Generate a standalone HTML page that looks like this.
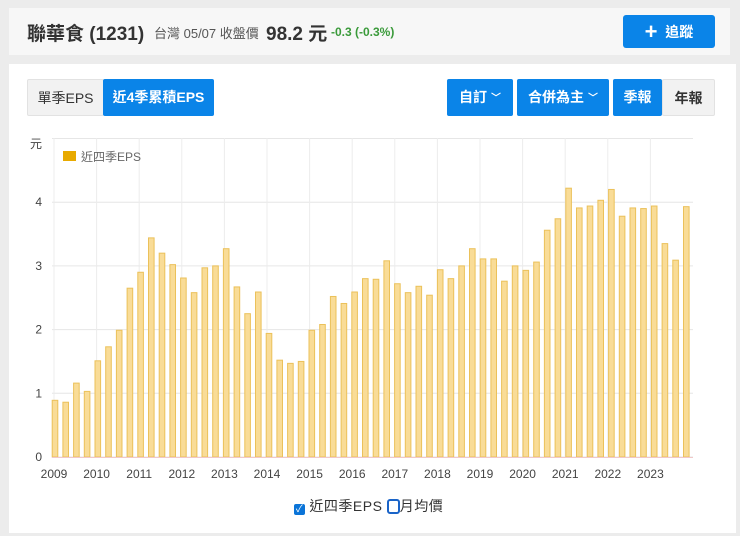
<!DOCTYPE html>
<html><head><meta charset="utf-8"><style>
body{margin:0;width:740px;height:536px;background:#ececec;font-family:"Liberation Sans","Noto Sans CJK TC",sans-serif;position:relative;overflow:hidden}
.card{position:absolute;background:#fff}
.b{position:absolute;top:79px;height:37px;line-height:37px;font-size:14px;text-align:center;color:#fff;background:#0a84e8;border-radius:2px;font-weight:bold}
.g{background:#f2f2f2;color:#333;border:1px solid #e2e2e2;box-sizing:border-box}
.c{font-size:10px;vertical-align:1px}
</style></head><body>
<div class="card" style="left:9px;top:8px;width:721px;height:47px;background:#f7f7f7"></div>
<div style="position:absolute;left:27px;top:19px;font-size:19px;font-weight:bold;color:#333">聯華食 (1231)</div>
<div style="position:absolute;left:154px;top:23px;font-size:13px;color:#555">台灣 05/07 收盤價</div>
<div style="position:absolute;left:266px;top:19px;font-size:19px;font-weight:bold;color:#333">98.2 元</div>
<div style="position:absolute;left:331px;top:25px;font-size:12px;font-weight:bold;color:#3a9a3a">-0.3 (-0.3%)</div>
<div style="position:absolute;left:623px;top:15px;width:92px;height:33px;background:#0a84e8;border-radius:3px;color:#fff;font-size:14px;font-weight:bold;line-height:33px;text-align:center"><span style="font-size:22px;vertical-align:-2px">+</span>&nbsp; 追蹤</div>
<div class="card" style="left:9px;top:64px;width:727px;height:469px"></div>
<div class="b g" style="left:27px;width:77px;font-weight:normal">單季EPS</div>
<div class="b" style="left:103px;width:111px">近4季累積EPS</div>
<div class="b" style="left:447px;width:66px">自訂 <span class="c">﹀</span></div>
<div class="b" style="left:517px;width:92px">合併為主 <span class="c">﹀</span></div>
<div class="b" style="left:613px;width:49px">季報</div>
<div class="b g" style="left:662px;width:53px">年報</div>
<svg style="position:absolute;left:0;top:0" width="740" height="536" id="s"></svg>
<div style="position:absolute;left:294px;top:496px;font-size:14px;color:#333;letter-spacing:0.5px"><span style="display:inline-block;width:11px;height:11px;background:#0a74d8;border-radius:2px;color:#fff;font-size:10px;line-height:11px;text-align:center;vertical-align:-1px">✓</span> 近四季EPS <span style="display:inline-block;width:13px;height:15px;border:2px solid #1a64c8;border-radius:3px;vertical-align:-3px;box-sizing:border-box"></span>月均價</div>
<script>
var v=[0.89,0.86,1.16,1.03,1.51,1.73,1.99,2.65,2.90,3.44,3.20,3.02,2.81,2.58,2.97,3.00,3.27,2.67,2.25,2.59,1.94,1.52,1.47,1.50,1.99,2.08,2.52,2.41,2.59,2.80,2.79,3.08,2.72,2.58,2.68,2.54,2.94,2.80,3.00,3.27,3.11,3.11,2.76,3.00,2.93,3.06,3.56,3.74,4.22,3.91,3.94,4.03,4.20,3.78,3.91,3.90,3.94,3.35,3.09,3.93];
var h='',y0=457,u=63.7;
for(var i=0;i<=5;i++){var y=y0-i*u;h+='<line x1="52" x2="693" y1="'+y+'" y2="'+y+'" stroke="#e6e6e6"/>';if(i<5)h+='<text x="42" y="'+(y+4)+'" font-size="12" fill="#444" text-anchor="end">'+i+'</text>';}
h+='<text x="30" y="148" font-size="12" fill="#444">元</text>';
for(var k=0;k<15;k++){var x=54+k*42.6;h+='<line x1="'+x+'" x2="'+x+'" y1="138" y2="457" stroke="#ececec"/><text x="'+x+'" y="478" font-size="12" fill="#444" text-anchor="middle">'+(2009+k)+'</text>';}
for(var i=0;i<60;i++){var x=55+i*10.7,t=v[i]*u;h+='<rect x="'+(x-2.8)+'" y="'+(y0-t)+'" width="5.6" height="'+t+'" fill="#f9dc97" stroke="#ebc15a" stroke-width="1"/>';}
h+='<line x1="52" x2="693" y1="457.5" y2="457.5" stroke="#f0c8c8"/>';
h+='<rect x="63" y="151" width="13" height="10" fill="#e8aa00"/><text x="81" y="161" font-size="12" fill="#666">近四季EPS</text>';
document.getElementById('s').innerHTML=h;
</script>
</body></html>
